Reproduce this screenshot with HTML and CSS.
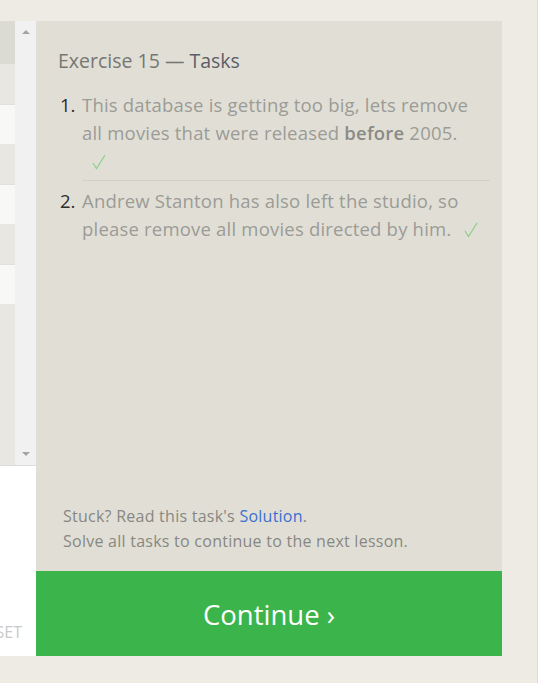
FILE: index.html
```html
<!DOCTYPE html>
<html lang="en">
<head>
<meta charset="utf-8">
<title>Exercise 15 — Tasks</title>
<link rel="stylesheet" href="styles.css">
</head>
<body>
<div class="page">
  <div class="left">
    <div class="table-area">
      <div class="rows">
        <div class="row row-head"></div>
        <div class="row row-gray"></div>
        <div class="row row-white"></div>
        <div class="row row-gray"></div>
        <div class="row row-white"></div>
        <div class="row row-gray"></div>
        <div class="row row-white"></div>
        <div class="row row-rest"></div>
      </div>
      <div class="scrollbar">
        <span class="arrow arrow-up"></span>
        <span class="arrow arrow-down"></span>
      </div>
    </div>
    <div class="editor-foot">
      <span class="reset">RESET</span>
    </div>
  </div>
  <div class="panel">
    <div class="tasks">
      <h2 class="title">Exercise 15 — <span class="title-strong">Tasks</span></h2>
      <ol class="task-list">
        <li class="task">
          <span class="num">1.</span>
          <span class="task-text">This database is getting too big, lets remove all movies that were released <b>before</b> 2005. <span class="check check-block"><svg width="14" height="16" viewBox="0 0 14 16"><polyline points="1,9 4.5,14.5 13,1" fill="none" stroke="#8fcf8f" stroke-width="1.3"/></svg></span></span>
        </li>
        <li class="task">
          <span class="num">2.</span>
          <span class="task-text">Andrew Stanton has also left the studio, so please remove all movies directed by him. <span class="check"><svg width="14" height="16" viewBox="0 0 14 16"><polyline points="1,9 4.5,14.5 13,1" fill="none" stroke="#8fcf8f" stroke-width="1.3"/></svg></span></span>
        </li>
      </ol>
      <div class="spacer"></div>
      <div class="foot">
        <p>Stuck? Read this task's <a class="link" href="#">Solution</a>.</p>
        <p>Solve all tasks to continue to the next lesson.</p>
      </div>
    </div>
    <div class="continue">Continue ›</div>
  </div>
  <div class="edge"></div>
</div>
</body>
</html>
```
FILE: styles.css
```css
html, body {
  margin: 0;
  padding: 0;
}
body {
  background: #eeebe4;
  font-family: "Open Sans", "Noto Sans", sans-serif;
  width: 538px;
  height: 683px;
  overflow: hidden;
}
.page {
  display: flex;
  padding-top: 21px;
  height: 662px;
  box-sizing: border-box;
}
.left {
  width: 36px;
  display: flex;
  flex-direction: column;
  height: 635px;
}
.table-area {
  display: flex;
  height: 444px;
  border-bottom: 1px solid #dcdcdc;
}
.rows {
  width: 15px;
  display: flex;
  flex-direction: column;
}
.row { height: 40px; }
.row-head { height: 43px; background: #dcdbd3; }
.row-gray { background: #e8e7e1; }
.row-white { background: #f8f8f7; border-top: 1px solid #e2e1dc; height: 39px; }
.row-rest { flex: 1; background: #e8e7e1; }
.scrollbar {
  width: 21px;
  background: #f1f1f1;
  display: flex;
  flex-direction: column;
  justify-content: space-between;
  align-items: center;
  padding: 9px 0 9px;
  box-sizing: border-box;
}
.arrow {
  width: 0;
  height: 0;
  border-left: 4px solid transparent;
  border-right: 4px solid transparent;
}
.arrow-up { border-bottom: 4px solid #a3a3a3; }
.arrow-down { border-top: 4px solid #a3a3a3; }
.editor-foot {
  flex: 1;
  background: #ffffff;
  display: flex;
  justify-content: flex-end;
  align-items: flex-end;
  padding: 0 14px 13px 0;
  overflow: hidden;
}
.reset {
  color: #c9c9c9;
  font-size: 16px;
  line-height: 22px;
  white-space: nowrap;
}
.panel {
  width: 466px;
  display: flex;
  flex-direction: column;
  height: 635px;
}
.tasks {
  background: #e1dfd5;
  height: 550px;
  box-sizing: border-box;
  padding: 26px 12px 17px 22px;
  display: flex;
  flex-direction: column;
}
.title {
  margin: 0;
  font-size: 19.5px;
  line-height: 28px;
  font-weight: 400;
  color: #767674;
}
.title-strong { color: #5c5d66; }
.task-list {
  list-style: none;
  margin: 11px 0 0;
  padding: 0 0 0 2px;
}
.task {
  display: flex;
  font-size: 18.5px;
  line-height: 28px;
  letter-spacing: 0.2px;
  padding: 5px 0 5px;
}
.task + .task {
  border-top: 1px solid #d3d1c7;
  margin-left: 22px;
  padding: 6px 0 5px;
}
.task + .task .num { margin-left: -22px; }
.num {
  width: 22px;
  flex: none;
  color: #2d2d2d;
  letter-spacing: 0;
}
.task-text {
  color: #9b9b97;
  flex: 1;
}
.task-text b { color: #8a8a86; font-weight: 600; }
.check {
  display: inline-block;
  margin-left: 8px;
  vertical-align: -2px;
}
.check-block {
  display: block;
  margin-left: 10px;
  width: 14px;
  height: 28px;
  padding-top: 2px;
  box-sizing: border-box;
}
.spacer { flex: 1; }
.foot {
  padding-left: 5px;
  font-size: 16px;
  line-height: 25px;
  letter-spacing: 0.25px;
  color: #878783;
}
.foot p { margin: 0; }
.link { color: #3a6fcf; text-decoration: none; }
.continue {
  height: 85px;
  background: #3bb54b;
  color: #ffffff;
  font-size: 27.5px;
  padding-top: 2px;
  box-sizing: border-box;
  display: flex;
  align-items: center;
  justify-content: center;
}
.edge {
  flex: 1;
  align-self: stretch;
  margin-top: -21px;
  height: 683px;
  border-right: 1px solid #e0ddd6;
}
```
